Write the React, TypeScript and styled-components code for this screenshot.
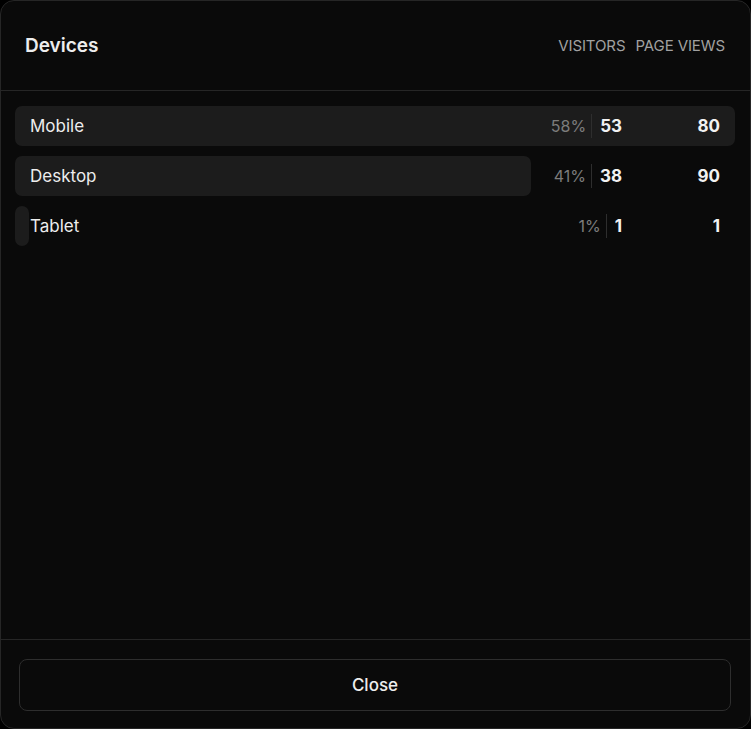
import styled, { createGlobalStyle } from 'styled-components'

type DeviceRow = {
  name: string
  share: number
  visitors: number
  pageViews: number
}

const rows: DeviceRow[] = [
  { name: 'Mobile', share: 58, visitors: 53, pageViews: 80 },
  { name: 'Desktop', share: 41, visitors: 38, pageViews: 90 },
  { name: 'Tablet', share: 1, visitors: 1, pageViews: 1 }
]

const maxVisitors = Math.max(...rows.map((r) => r.visitors))

const GlobalStyle = createGlobalStyle`
  html, body {
    margin: 0;
    padding: 0;
    background: #000;
  }
  body {
    font-family: Inter, "Noto Sans", sans-serif;
    -webkit-font-smoothing: antialiased;
  }
`

const Modal = styled.div`
  box-sizing: border-box;
  width: 751px;
  height: 729px;
  display: flex;
  flex-direction: column;
  background: #0a0a0a;
  border: 1px solid #262626;
  border-radius: 14px;
  overflow: hidden;
`

const Header = styled.header`
  height: 89px;
  display: flex;
  align-items: center;
  justify-content: space-between;
  padding: 0 25px 0 24px;
  border-bottom: 1px solid #262626;
`

const Title = styled.h2`
  margin: 0;
  font-size: 19px;
  font-weight: 600;
  color: #ededed;
  letter-spacing: 0;
`

const ColumnHeads = styled.div`
  display: flex;
  gap: 10px;
`

const ColumnHead = styled.span`
  font-size: 15px;
  font-weight: 400;
  color: #a1a1a1;
  letter-spacing: -0.1px;
`

const List = styled.div`
  flex: 1;
  display: flex;
  flex-direction: column;
  gap: 10px;
  padding: 15px 15px 15px 14px;
`

const Row = styled.div`
  position: relative;
  height: 40px;
  display: flex;
  align-items: center;
  padding: 0 15px;
`

const Bar = styled.div`
  position: absolute;
  left: 0;
  top: 0;
  bottom: 0;
  min-width: 13px;
  background: #1c1c1c;
  border-radius: 7px;
`

const Label = styled.span`
  position: relative;
  flex: 1;
  font-size: 17px;
  color: #ededed;
  letter-spacing: 0;
`

const Visitors = styled.div`
  position: relative;
  display: flex;
  align-items: center;
`

const Share = styled.span`
  font-size: 16px;
  color: #7c7c7c;
  letter-spacing: 0;
`

const Divider = styled.span`
  width: 1px;
  height: 24px;
  background: #2e2e2e;
  margin: 0 8px 0 5px;
`

const Count = styled.span<{ $width?: number }>`
  position: relative;
  font-size: 17px;
  font-weight: 700;
  color: #f2f2f2;
  letter-spacing: 0;
  text-align: right;
  width: ${({ $width }) => ($width ? `${$width}px` : 'auto')};
`

const Footer = styled.footer`
  border-top: 1px solid #262626;
  padding: 19px 19px 17px 18px;
`

const CloseButton = styled.button`
  box-sizing: border-box;
  width: 100%;
  height: 52px;
  background: #0a0a0a;
  border: 1px solid #2e2e2e;
  border-radius: 8px;
  font-family: inherit;
  font-size: 17px;
  font-weight: 500;
  color: #ededed;
  letter-spacing: 0;
  cursor: pointer;
`

export default function App() {
  return (
    <>
      <GlobalStyle />
      <Modal>
        <Header>
          <Title>Devices</Title>
          <ColumnHeads>
            <ColumnHead>VISITORS</ColumnHead>
            <ColumnHead>PAGE VIEWS</ColumnHead>
          </ColumnHeads>
        </Header>
        <List>
          {rows.map((row) => (
            <Row key={row.name}>
              <Bar style={{ width: `${(row.visitors / maxVisitors) * 100}%` }} />
              <Label>{row.name}</Label>
              <Visitors>
                <Share>{row.share}%</Share>
                <Divider />
                <Count>{row.visitors}</Count>
              </Visitors>
              <Count $width={98}>{row.pageViews}</Count>
            </Row>
          ))}
        </List>
        <Footer>
          <CloseButton>Close</CloseButton>
        </Footer>
      </Modal>
    </>
  )
}
